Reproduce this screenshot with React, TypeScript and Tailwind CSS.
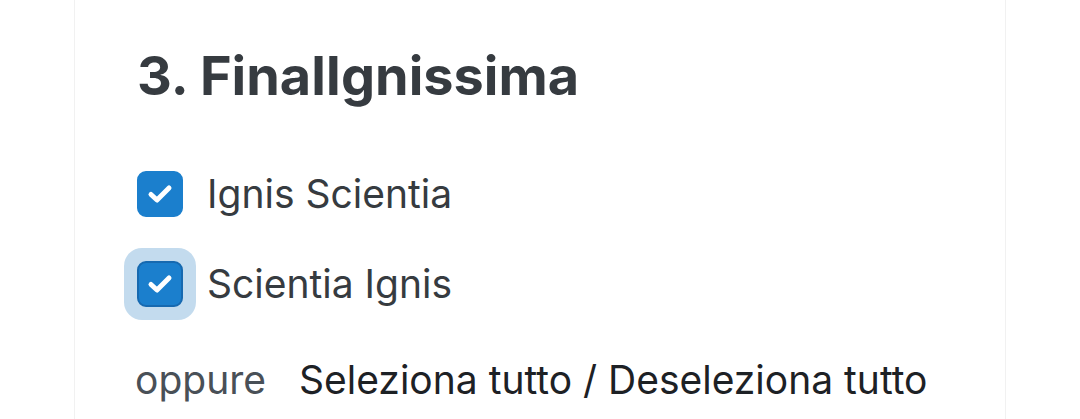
import React from 'react';

function Check({ focused }: { focused?: boolean }) {
    return (
        <span
            className={
                'flex h-[72px] w-[72px] shrink-0 items-center justify-center rounded-[18px] ' +
                (focused ? 'bg-[#c3dbee]' : '')
            }
        >
            <span
                className={
                    'flex h-[46px] w-[46px] items-center justify-center rounded-[9px] border-2 bg-[#1b7fcd] ' +
                    (focused ? 'border-[#1669b0]' : 'border-[#1b7fcd]')
                }
            >
                <svg width="26" height="22" viewBox="0 0 26 22" fill="none">
                    <path
                        d="M4 11.5 L10 17 L22 5"
                        stroke="#ffffff"
                        strokeWidth="5"
                        strokeLinecap="round"
                        strokeLinejoin="round"
                    />
                </svg>
            </span>
        </span>
    );
}

export default function App() {
    const items = [
        { label: 'Ignis Scientia', focused: false },
        { label: 'Scientia Ignis', focused: true },
    ];

    return (
        <div className="h-[419px] w-[1080px] overflow-hidden bg-white font-['Inter',sans-serif]">
            <div className="mx-[74px] h-full border-x border-[#f1f1f1] bg-white px-[62px] pt-[44px]">
                <h3 className="text-[54px] font-bold leading-[1.2] text-[#363b40]">3. FinalIgnissima</h3>

                <div className="mt-[49px] flex flex-col gap-[18px]">
                    {items.map((it) => (
                        <label key={it.label} className="-ml-[13px] flex items-center gap-[11px]">
                            <Check focused={it.focused} />
                            <span className="text-[39px] leading-none text-[#363b40]">{it.label}</span>
                        </label>
                    ))}
                </div>

                <div className="mt-[31px] -ml-[2px] flex items-baseline gap-[33px] text-[39px] leading-[1.5]">
                    <span className="text-[#495057]">oppure</span>
                    <span className="text-[#1d2125]">Seleziona tutto / Deseleziona tutto</span>
                </div>
            </div>
        </div>
    );
}
